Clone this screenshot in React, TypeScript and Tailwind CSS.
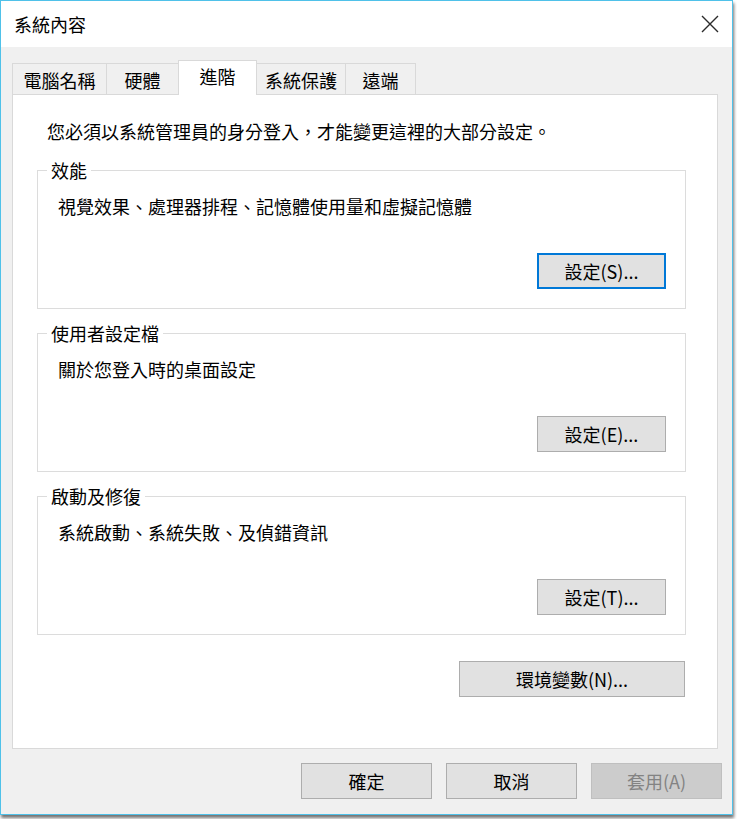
import React from "react";

const Btn = ({ label, className = "", focused = false, disabled = false }: { label: string; className?: string; focused?: boolean; disabled?: boolean }) => (
  <div
    className={`flex items-center justify-center text-[18px] leading-[24px] ${
      disabled
        ? "bg-[#cccccc] border border-[#bfbfbf] text-[#838383]"
        : focused
        ? "bg-[#e1e1e1] border-2 border-[#0078d7] text-black"
        : "bg-[#e1e1e1] border border-[#adadad] text-black"
    } ${className}`}
  >
    {label}
  </div>
);

const Group = ({ title, desc, btn, focused = false }: { title: string; desc: string; btn: string; focused?: boolean }) => (
  <div className="relative ml-[24px] w-[649px] h-[139px] border border-[#dcdcdc] flex flex-col">
    <span className="absolute left-[9px] top-[-11px] px-[4px] bg-white text-[18px] leading-[20px] text-black">{title}</span>
    <div className="pl-[20px] pt-[23px] text-[18px] leading-[24px] text-black">{desc}</div>
    <Btn label={btn} focused={focused} className="mt-auto self-end mr-[19px] mb-[19px] w-[129px] h-[36px]" />
  </div>
);

export default function App() {
  const tabs = [
    { label: "電腦名稱", w: "w-[95px]" },
    { label: "硬體", w: "w-[73px]" },
    { label: "進階", w: "w-[79px]", active: true },
    { label: "系統保護", w: "w-[90px]" },
    { label: "遠端", w: "w-[71px]" },
  ];
  return (
    <div className="w-[737px] h-[819px] bg-white font-['Noto_Sans_CJK_TC','Noto_Sans_CJK_SC',sans-serif] text-black">
      <div className="w-[733px] h-[815px] border border-[#4fc1e9] bg-[#f0f0f0] flex flex-col shadow-[1px_3px_3px_rgba(0,0,0,0.55)]">
        {/* title bar */}
        <div className="h-[46px] bg-white flex items-center justify-between pl-[13px] pr-[13px]">
          <span className="text-[18px] leading-[24px]">系統內容</span>
          <svg width="18" height="18" viewBox="0 0 18 18">
            <path d="M1 1 L17 17 M17 1 L1 17" stroke="#2b2b2b" strokeWidth="1.4" fill="none" />
          </svg>
        </div>
        {/* tabs */}
        <div className="flex items-end pl-[11px] pt-[13px] h-[47px]">
          {tabs.map((t, i) => (
            <div
              key={t.label}
              className={`${t.w} ${i > 0 ? "-ml-px" : ""} border border-b-0 border-[#d9d9d9] flex justify-center text-[18px] leading-[24px] ${
                t.active ? "relative z-10 h-[35px] mb-[-1px] bg-white pt-[3px]" : "h-[31px] bg-[#f0f0f0] pt-[4px]"
              }`}
            >
              {t.label}
            </div>
          ))}
        </div>
        {/* panel */}
        <div className="ml-[11px] w-[706px] h-[655px] border border-[#d9d9d9] bg-white flex flex-col">
          <div className="pl-[34px] pt-[24px] text-[18px] leading-[24px]">您必須以系統管理員的身分登入，才能變更這裡的大部分設定。</div>
          <div className="mt-[27px]">
            <Group title="效能" desc="視覺效果、處理器排程、記憶體使用量和虛擬記憶體" btn="設定(S)..." focused />
          </div>
          <div className="mt-[24px]">
            <Group title="使用者設定檔" desc="關於您登入時的桌面設定" btn="設定(E)..." />
          </div>
          <div className="mt-[24px]">
            <Group title="啟動及修復" desc="系統啟動、系統失敗、及偵錯資訊" btn="設定(T)..." />
          </div>
          <Btn label="環境變數(N)..." className="mt-[26px] self-end mr-[32px] w-[226px] h-[36px]" />
        </div>
        {/* bottom buttons */}
        <div className="flex justify-end gap-[14px] pr-[10px] mt-[14px]">
          <Btn label="確定" className="w-[131px] h-[36px]" />
          <Btn label="取消" className="w-[131px] h-[36px]" />
          <Btn label="套用(A)" disabled className="w-[131px] h-[36px]" />
        </div>
      </div>
    </div>
  );
}
